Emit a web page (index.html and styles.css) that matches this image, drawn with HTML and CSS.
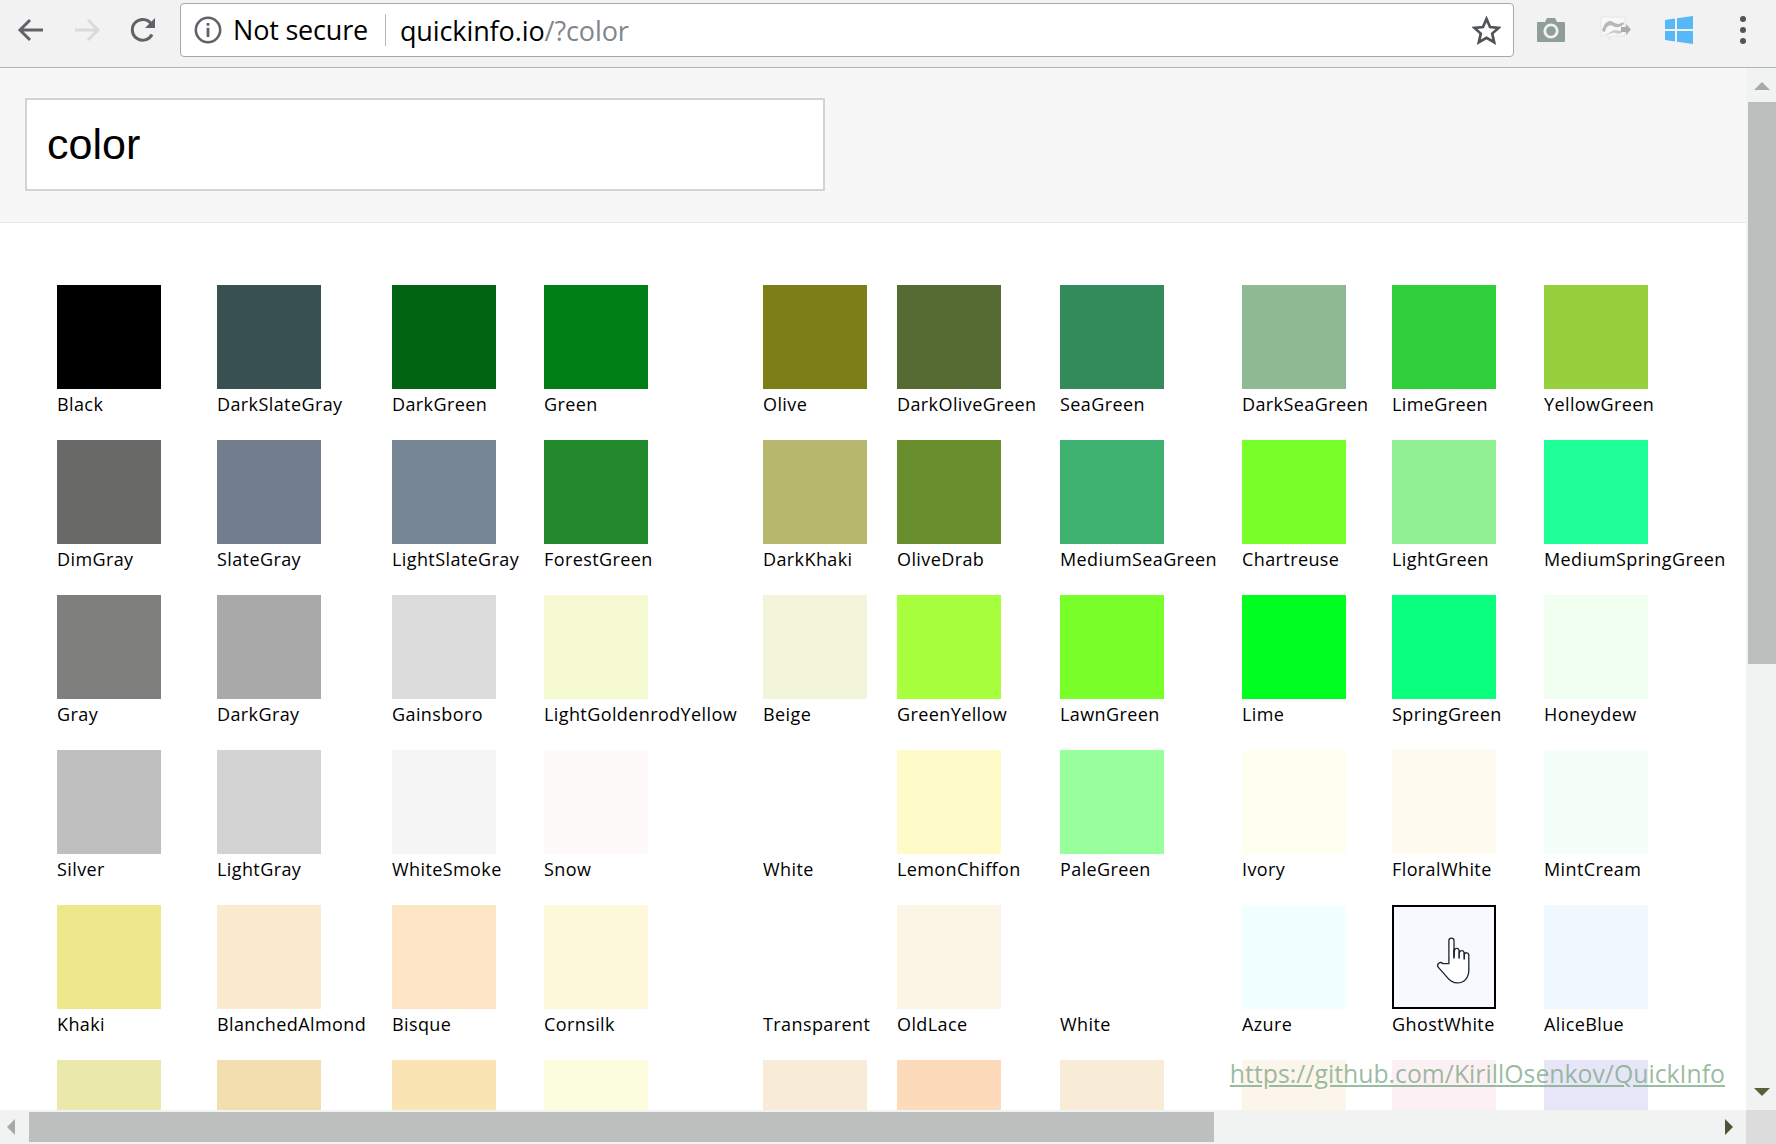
FILE: index.html
```html
<!DOCTYPE html>
<html lang="en">
<head>
    <meta charset="UTF-8">
    <title>QuickInfo - color</title>
    <link rel="stylesheet" href="styles.css">
</head>
<body>
    <header class="toolbar">
        <svg class="nav-icon" viewBox="0 0 28 28"><path d="M26 14H4M13 4L3 14l10 10" fill="none" stroke="#5f6368" stroke-width="3"/></svg>
        <svg class="nav-icon forward" viewBox="0 0 28 28"><path d="M2 14h22M15 4l10 10-10 10" fill="none" stroke="#d8dadb" stroke-width="3"/></svg>
        <svg class="nav-icon reload" viewBox="0 0 28 28"><path d="M23 18.500A10.400 10.400 0 1 1 22 7.500" fill="none" stroke="#5f6368" stroke-width="3"/><path d="M26 2v10H16z" fill="#5f6368"/></svg>
        <div class="address">
            <svg class="info-icon" viewBox="0 0 26 26"><circle cx="13" cy="13" r="11.300" fill="none" stroke="#5f6368" stroke-width="2.400"/><path d="M11.700 6.500h2.600v2.600h-2.600zM11.700 11h2.600v8.500h-2.600z" fill="#5f6368"/></svg>
            <span class="secure">Not secure</span>
            <span class="url">quickinfo.io<span class="url-rest">/?color</span></span>
            <svg class="star-icon" viewBox="0 0 28 28"><path d="M14 2.800l3.400 7.800 8.400.8-6.300 5.600 1.900 8.300L14 21.100l-7.400 4.200 1.900-8.300-6.300-5.600 8.400-.8z" fill="none" stroke="#4f5459" stroke-width="2.600"/></svg>
        </div>
        <div class="extensions">
            <svg class="ext-icon camera" viewBox="0 0 30 28"><path d="M2 6h7l2-4h8l2 4h7a1 1 0 0 1 1 1v18a1 1 0 0 1-1 1H2a1 1 0 0 1-1-1V7a1 1 0 0 1 1-1z" fill="#8f9e99"/><circle cx="15" cy="15" r="6.200" fill="none" stroke="#f1f1f1" stroke-width="2.800"/></svg>
            <svg class="ext-icon swirl" viewBox="0 0 32 28"><path d="M1 1h24v19H11l-2 4v-4H1z" fill="#f8f8f8" stroke="#e6e6e6"/><path d="M2 15C4 6 9 3 13 6c3 2 6 3 10 0l1 2c-4 4-8 4-11 2-4-2-7 0-8 6z" fill="#b5b8b6"/><path d="M4 18c5 1 8-5 12-4 3 1 3 1 6 0v3c-3 1-4 1-7 0-3-1-6 3-11 1z" fill="#c9ccca"/><path d="M21 11h5V8l5 5.500L26 19v-3h-5z" fill="#a9acaa"/></svg>
            <svg class="ext-icon windows" viewBox="0 0 30 30"><path d="M1 5l10-1.500V14H1zM13 3.200L29 1v13H13zM1 16h10v10.500L1 25zM13 16h16v13l-16-2.200z" fill="#56b8f6"/></svg>
        </div>
        <div class="kebab"><i></i><i></i><i></i></div>
    </header>

    <div class="viewport">
        <main class="page">
            <div class="search-area">
                <div class="search-box">color</div>
            </div>

            <div class="colors">
                <!-- row 1 -->
                <div class="cell"><div class="swatch" style="background:#000000"></div><div class="name">Black</div></div>
                <div class="cell"><div class="swatch" style="background:#385052"></div><div class="name">DarkSlateGray</div></div>
                <div class="cell"><div class="swatch" style="background:#006412"></div><div class="name">DarkGreen</div></div>
                <div class="cell"><div class="swatch" style="background:#007f16"></div><div class="name">Green</div></div>
                <div class="cell"><div class="swatch" style="background:#7c7f17"></div><div class="name">Olive</div></div>
                <div class="cell"><div class="swatch" style="background:#566b34"></div><div class="name">DarkOliveGreen</div></div>
                <div class="cell"><div class="swatch" style="background:#338a5b"></div><div class="name">SeaGreen</div></div>
                <div class="cell"><div class="swatch" style="background:#8fb992"></div><div class="name">DarkSeaGreen</div></div>
                <div class="cell"><div class="swatch" style="background:#30d03d"></div><div class="name">LimeGreen</div></div>
                <div class="cell"><div class="swatch" style="background:#96d03c"></div><div class="name">YellowGreen</div></div>
                <!-- row 2 -->
                <div class="cell"><div class="swatch" style="background:#696967"></div><div class="name">DimGray</div></div>
                <div class="cell"><div class="swatch" style="background:#727d8e"></div><div class="name">SlateGray</div></div>
                <div class="cell"><div class="swatch" style="background:#778695"></div><div class="name">LightSlateGray</div></div>
                <div class="cell"><div class="swatch" style="background:#238b2e"></div><div class="name">ForestGreen</div></div>
                <div class="cell"><div class="swatch" style="background:#b7b76e"></div><div class="name">DarkKhaki</div></div>
                <div class="cell"><div class="swatch" style="background:#688e2e"></div><div class="name">OliveDrab</div></div>
                <div class="cell"><div class="swatch" style="background:#3fb272"></div><div class="name">MediumSeaGreen</div></div>
                <div class="cell"><div class="swatch" style="background:#78ff29"></div><div class="name">Chartreuse</div></div>
                <div class="cell"><div class="swatch" style="background:#92f094"></div><div class="name">LightGreen</div></div>
                <div class="cell"><div class="swatch" style="background:#1fff98"></div><div class="name">MediumSpringGreen</div></div>
                <!-- row 3 -->
                <div class="cell"><div class="swatch" style="background:#7f7f7d"></div><div class="name">Gray</div></div>
                <div class="cell"><div class="swatch" style="background:#a9a9a9"></div><div class="name">DarkGray</div></div>
                <div class="cell"><div class="swatch" style="background:#dcdcdc"></div><div class="name">Gainsboro</div></div>
                <div class="cell"><div class="swatch" style="background:#f5fad3"></div><div class="name">LightGoldenrodYellow</div></div>
                <div class="cell"><div class="swatch" style="background:#f2f5da"></div><div class="name">Beige</div></div>
                <div class="cell"><div class="swatch" style="background:#a7ff3e"></div><div class="name">GreenYellow</div></div>
                <div class="cell"><div class="swatch" style="background:#78ff29"></div><div class="name">LawnGreen</div></div>
                <div class="cell"><div class="swatch" style="background:#00ff21"></div><div class="name">Lime</div></div>
                <div class="cell"><div class="swatch" style="background:#0aff7f"></div><div class="name">SpringGreen</div></div>
                <div class="cell"><div class="swatch" style="background:#f0fff0"></div><div class="name">Honeydew</div></div>
                <!-- row 4 -->
                <div class="cell"><div class="swatch" style="background:#bfbfbf"></div><div class="name">Silver</div></div>
                <div class="cell"><div class="swatch" style="background:#d3d3d3"></div><div class="name">LightGray</div></div>
                <div class="cell"><div class="swatch" style="background:#f5f5f5"></div><div class="name">WhiteSmoke</div></div>
                <div class="cell"><div class="swatch" style="background:#fffafa"></div><div class="name">Snow</div></div>
                <div class="cell"><div class="swatch" style="background:#ffffff"></div><div class="name">White</div></div>
                <div class="cell"><div class="swatch" style="background:#fffbc9"></div><div class="name">LemonChiffon</div></div>
                <div class="cell"><div class="swatch" style="background:#97ff9b"></div><div class="name">PaleGreen</div></div>
                <div class="cell"><div class="swatch" style="background:#fffff0"></div><div class="name">Ivory</div></div>
                <div class="cell"><div class="swatch" style="background:#fffaf0"></div><div class="name">FloralWhite</div></div>
                <div class="cell"><div class="swatch" style="background:#f5fffa"></div><div class="name">MintCream</div></div>
                <!-- row 5 -->
                <div class="cell"><div class="swatch" style="background:#eee88c"></div><div class="name">Khaki</div></div>
                <div class="cell"><div class="swatch" style="background:#fbebce"></div><div class="name">BlanchedAlmond</div></div>
                <div class="cell"><div class="swatch" style="background:#fce4c5"></div><div class="name">Bisque</div></div>
                <div class="cell"><div class="swatch" style="background:#fef8da"></div><div class="name">Cornsilk</div></div>
                <div class="cell"><div class="swatch"></div><div class="name">Transparent</div></div>
                <div class="cell"><div class="swatch" style="background:#fbf5e6"></div><div class="name">OldLace</div></div>
                <div class="cell"><div class="swatch" style="background:#ffffff"></div><div class="name">White</div></div>
                <div class="cell"><div class="swatch" style="background:#f0ffff"></div><div class="name">Azure</div></div>
                <div class="cell">
                    <div class="swatch selected" style="background:#f8f8ff">
                        <svg class="hand" viewBox="0 0 36 48"><path d="M13 27V4.500a2.500 2.500 0 0 1 5 0V20l.5-6a2.300 2.300 0 0 1 4.500 0l.5 2a2.200 2.200 0 0 1 4.300 0l.4 2a2.200 2.200 0 0 1 4.300.5V33c0 8-4.500 13-11 13-5 0-8-2.500-11-6.500L2.500 30.500c-2-3 2-6 4.500-3.500z" fill="#fff" stroke="#1c2630" stroke-width="1.300"/><path d="M18 13v9M23 15v7M28 17v6" fill="none" stroke="#1c2630" stroke-width="1.600"/></svg>
                    </div>
                    <div class="name">GhostWhite</div>
                </div>
                <div class="cell"><div class="swatch" style="background:#f0f8ff"></div><div class="name">AliceBlue</div></div>
                <!-- row 6, cut off by the scrollbar -->
                <div class="cell"><div class="swatch" style="background:#eae8ab"></div></div>
                <div class="cell"><div class="swatch" style="background:#f3deb0"></div></div>
                <div class="cell"><div class="swatch" style="background:#fbe4b4"></div></div>
                <div class="cell"><div class="swatch" style="background:#fcfddf"></div></div>
                <div class="cell"><div class="swatch" style="background:#f8ecd8"></div></div>
                <div class="cell"><div class="swatch" style="background:#fddab9"></div></div>
                <div class="cell"><div class="swatch" style="background:#f8ecd8"></div></div>
                <div class="cell"><div class="swatch" style="background:#fbf5ec"></div></div>
                <div class="cell"><div class="swatch" style="background:#fdf0f5"></div></div>
                <div class="cell"><div class="swatch" style="background:#e6e6f8"></div></div>
            </div>

            <a class="repo-link" href="#">https://github.com/KirillOsenkov/QuickInfo</a>
        </main>

        <div class="vscroll">
            <div class="arrow-up"></div>
            <div class="vthumb"></div>
            <div class="arrow-down"></div>
        </div>
    </div>

    <div class="hscroll">
        <div class="arrow-left"></div>
        <div class="hthumb"></div>
        <div class="arrow-right"></div>
        <div class="corner"></div>
    </div>
</body>
</html>
```

FILE: styles.css
```css
* {
    box-sizing: border-box;
}

body {
    margin: 0;
    height: 100vh;
    display: flex;
    flex-direction: column;
    overflow: hidden;
    font-family: 'Open Sans', sans-serif;
    background: #fff;
    color: #000;
}

/* browser toolbar */
.toolbar {
    height: 68px;
    flex: none;
    display: flex;
    align-items: center;
    padding: 0 0 7px 17px;
    background: #f2f2f2;
    border-bottom: 1px solid #b4b4b4;
}

.nav-icon {
    width: 28px;
    height: 28px;
    flex: none;
}

.forward {
    margin-left: 28px;
}

.reload {
    margin-left: 28px;
}

.address {
    width: 1334px;
    height: 54px;
    flex: none;
    margin-left: 23px;
    display: flex;
    align-items: center;
    padding: 0 12px 0 13px;
    background: #fff;
    border: 1px solid #a9a9a9;
    border-radius: 4px;
    font-size: 27px;
}

.info-icon {
    width: 28px;
    height: 28px;
    flex: none;
}

.secure {
    margin-left: 11px;
    padding-right: 17px;
    border-right: 1px solid #b7b7b7;
    line-height: 32px;
    letter-spacing: -0.2px;
}

.url {
    margin-left: 14px;
    letter-spacing: -0.1px;
}

.url-rest {
    color: #80868b;
}

.star-icon {
    width: 29px;
    height: 29px;
    flex: none;
    margin-left: auto;
}

.extensions {
    display: flex;
    align-items: center;
    margin-left: 22px;
}

.ext-icon {
    flex: none;
}

.camera {
    width: 30px;
    height: 28px;
}

.swirl {
    width: 32px;
    height: 28px;
    margin-left: 34px;
}

.windows {
    width: 30px;
    height: 30px;
    margin-left: 32px;
}

.kebab {
    display: flex;
    flex-direction: column;
    gap: 5px;
    margin-left: 46px;
}

.kebab i {
    display: block;
    width: 6px;
    height: 6px;
    border-radius: 50%;
    background: #50555a;
}

/* page area */
.viewport {
    flex: 1;
    min-height: 0;
    display: flex;
}

.page {
    flex: 1;
    min-width: 0;
    position: relative;
    overflow: hidden;
}

.search-area {
    height: 155px;
    padding: 30px 0 0 25px;
    background: #f7f7f7;
    border-bottom: 1px solid #e6e6e6;
}

.search-box {
    width: 800px;
    height: 93px;
    padding-left: 20px;
    background: #fff;
    border: 2px solid #d3d3d3;
    font-family: 'Liberation Sans', sans-serif;
    font-size: 43px;
    line-height: 89px;
}

.colors {
    display: grid;
    grid-template-columns: 160px 175px 152px 219px 134px 163px 182px 150px 152px 200px;
    grid-auto-rows: 155px;
    padding: 62px 0 0 57px;
}

.swatch {
    width: 104px;
    height: 104px;
    position: relative;
}

.selected {
    border: 2px solid #000;
}

.name {
    margin-top: 2px;
    font-size: 18px;
    letter-spacing: 0.4px;
    line-height: 26px;
    white-space: nowrap;
}

.hand {
    position: absolute;
    left: 41px;
    top: 29px;
    width: 38px;
    height: 49px;
}

.repo-link {
    position: absolute;
    right: 21px;
    top: 989px;
    font-size: 24.800px;
    line-height: 32px;
    color: rgba(128, 170, 135, 0.8);
}

/* fake scrollbars */
.vscroll {
    width: 30px;
    flex: none;
    position: relative;
    background: #f1f2f2;
}

.vthumb {
    position: absolute;
    left: 2px;
    right: 0;
    top: 34px;
    height: 562px;
    background: #bdbfbe;
}

.arrow-up {
    position: absolute;
    left: 8px;
    top: 14px;
    border-left: 8px solid transparent;
    border-right: 8px solid transparent;
    border-bottom: 8px solid #a5aaab;
}

.arrow-down {
    position: absolute;
    left: 8px;
    bottom: 14px;
    border-left: 8px solid transparent;
    border-right: 8px solid transparent;
    border-top: 8px solid #585f3a;
}

.hscroll {
    height: 34px;
    flex: none;
    position: relative;
    background: #f1f2f2;
}

.hthumb {
    position: absolute;
    left: 29px;
    top: 2px;
    width: 1185px;
    height: 30px;
    background: #bdbfbe;
}

.arrow-left {
    position: absolute;
    left: 7px;
    top: 9px;
    border-top: 8px solid transparent;
    border-bottom: 8px solid transparent;
    border-right: 8px solid #a5aaab;
}

.arrow-right {
    position: absolute;
    left: 1725px;
    top: 9px;
    border-top: 8px solid transparent;
    border-bottom: 8px solid transparent;
    border-left: 8px solid #4e5435;
}

.corner {
    position: absolute;
    right: 0;
    top: 0;
    bottom: 0;
    width: 30px;
    background: #dcdcdc;
}
```
